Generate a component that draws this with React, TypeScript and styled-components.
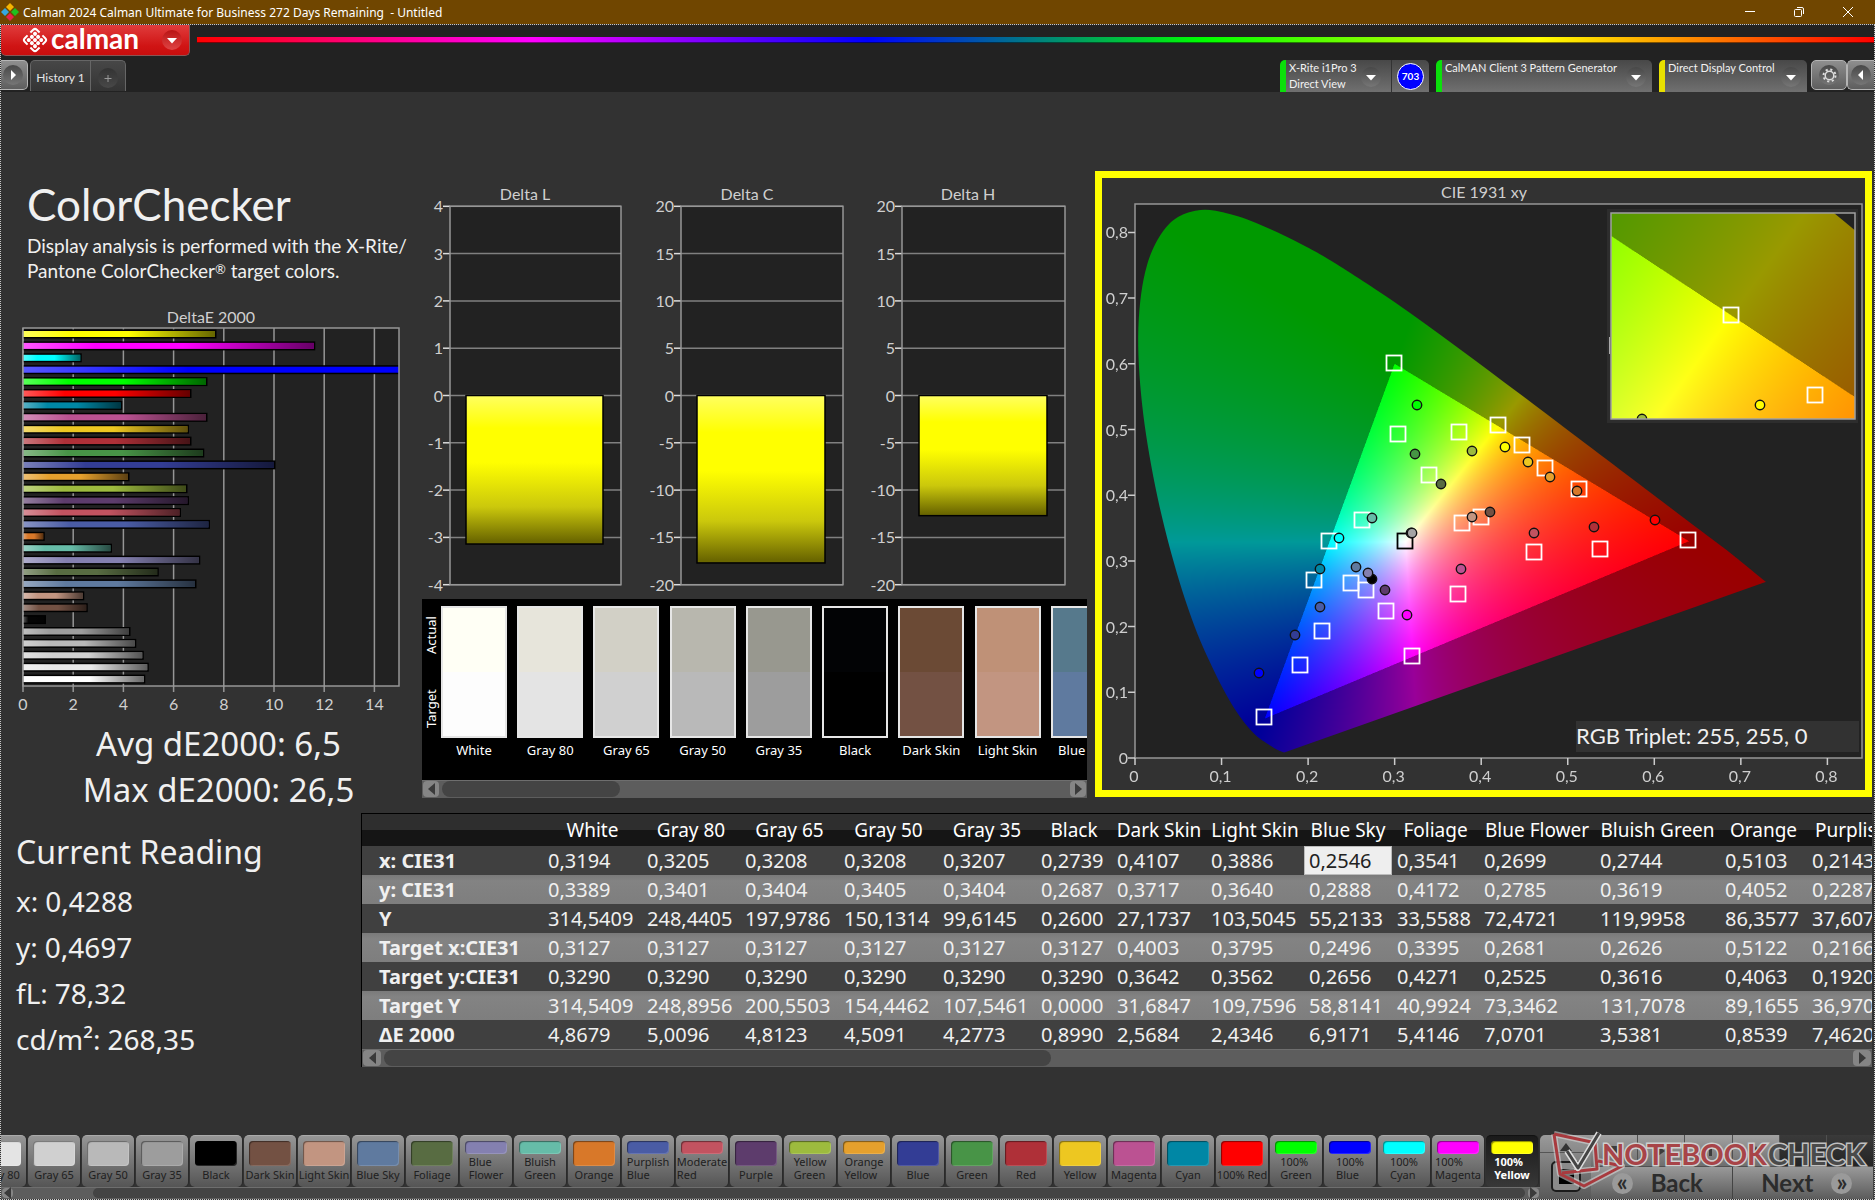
import React, { useLayoutEffect, useRef } from "react";
import styled, { createGlobalStyle, css } from "styled-components";

const UI = `"Lato", "Noto Sans", sans-serif`;
const WIDE = `"Noto Sans", "Open Sans", sans-serif`;

const GlobalStyle = createGlobalStyle`
  *, *::before, *::after { box-sizing: border-box; }
  body { margin: 0; background: #323232; color: #f0f0f0; font-family: ${UI}; }
  button { font: inherit; color: inherit; border: 0; padding: 0; margin: 0; background: none; cursor: pointer; }
  h1, h2, p, dl, dd, dt { margin: 0; font-weight: 400; }
`;

/* ---------- data ---------- */

type Patch = { name: string; color: string };

const PATCHES: Patch[] = [
  { name: "Gray 80", color: "#e4e4e4" },
  { name: "Gray 65", color: "#d0d0d0" },
  { name: "Gray 50", color: "#b9b9b9" },
  { name: "Gray 35", color: "#9d9d9d" },
  { name: "Black", color: "#000000" },
  { name: "Dark Skin", color: "#735143" },
  { name: "Light Skin", color: "#c29581" },
  { name: "Blue Sky", color: "#5f7a9f" },
  { name: "Foliage", color: "#586c42" },
  { name: "Blue Flower", color: "#8480b0" },
  { name: "Bluish Green", color: "#66bca8" },
  { name: "Orange", color: "#d87829" },
  { name: "Purplish Blue", color: "#4a5ca5" },
  { name: "Moderate Red", color: "#c25360" },
  { name: "Purple", color: "#5d3c6c" },
  { name: "Yellow Green", color: "#9dbb3e" },
  { name: "Orange Yellow", color: "#e5a02d" },
  { name: "Blue", color: "#333d95" },
  { name: "Green", color: "#489447" },
  { name: "Red", color: "#af3038" },
  { name: "Yellow", color: "#edc721" },
  { name: "Magenta", color: "#bb5292" },
  { name: "Cyan", color: "#0087a5" },
  { name: "100% Red", color: "#ff0000" },
  { name: "100% Green", color: "#00ff00" },
  { name: "100% Blue", color: "#0000ff" },
  { name: "100% Cyan", color: "#00ffff" },
  { name: "100% Magenta", color: "#ff00ff" },
  { name: "100% Yellow", color: "#ffff00" },
];

const DELTA_E: [string, number][] = [
  ["#ffff00", 7.72], ["#ff00ff", 11.67], ["#00ffff", 2.33], ["#0000ff", 26.5], ["#00ff00", 7.36],
  ["#ff0000", 6.72], ["#0087a5", 3.95], ["#bb5292", 7.36], ["#edc721", 6.62], ["#af3038", 6.72],
  ["#489447", 7.23], ["#333d95", 10.08], ["#e5a02d", 4.24], ["#9dbb3e", 6.56], ["#5d3c6c", 6.62],
  ["#c25360", 6.3], ["#4a5ca5", 7.46], ["#d87829", 0.85], ["#66bca8", 3.54], ["#8480b0", 7.07],
  ["#586c42", 5.41], ["#5f7a9f", 6.92], ["#c29581", 2.43], ["#735143", 2.57], ["#050505", 0.9],
  ["#9d9d9d", 4.28], ["#b9b9b9", 4.51], ["#d0d0d0", 4.81], ["#e8e8e8", 5.01], ["#ffffff", 4.87],
];

const SWATCHES: { name: string; actual: string; target: string }[] = [
  { name: "White", actual: "#fffff5", target: "#fdfdfd" },
  { name: "Gray 80", actual: "#e7e5db", target: "#e4e4e4" },
  { name: "Gray 65", actual: "#d2d0c6", target: "#d0d0d0" },
  { name: "Gray 50", actual: "#b8b7ae", target: "#b9b9b9" },
  { name: "Gray 35", actual: "#98988f", target: "#9d9d9d" },
  { name: "Black", actual: "#020305", target: "#000000" },
  { name: "Dark Skin", actual: "#6b4a35", target: "#735143" },
  { name: "Light Skin", actual: "#bf9177", target: "#c29581" },
  { name: "Blue Sky", actual: "#56798c", target: "#5f7a9f" },
];

const COLUMNS: [string, number][] = [
  ["White", 99], ["Gray 80", 98], ["Gray 65", 99], ["Gray 50", 99], ["Gray 35", 98], ["Black", 76],
  ["Dark Skin", 94], ["Light Skin", 98], ["Blue Sky", 88], ["Foliage", 87], ["Blue Flower", 116],
  ["Bluish Green", 125], ["Orange", 87], ["Purplish Blue", 134],
];

const ROWS: [string, string[]][] = [
  ["x: CIE31", ["0,3194", "0,3205", "0,3208", "0,3208", "0,3207", "0,2739", "0,4107", "0,3886", "0,2546", "0,3541", "0,2699", "0,2744", "0,5103", "0,2143"]],
  ["y: CIE31", ["0,3389", "0,3401", "0,3404", "0,3405", "0,3404", "0,2687", "0,3717", "0,3640", "0,2888", "0,4172", "0,2785", "0,3619", "0,4052", "0,2287"]],
  ["Y", ["314,5409", "248,4405", "197,9786", "150,1314", "99,6145", "0,2600", "27,1737", "103,5045", "55,2133", "33,5588", "72,4721", "119,9958", "86,3577", "37,6070"]],
  ["Target x:CIE31", ["0,3127", "0,3127", "0,3127", "0,3127", "0,3127", "0,3127", "0,4003", "0,3795", "0,2496", "0,3395", "0,2681", "0,2626", "0,5122", "0,2166"]],
  ["Target y:CIE31", ["0,3290", "0,3290", "0,3290", "0,3290", "0,3290", "0,3290", "0,3642", "0,3562", "0,2656", "0,4271", "0,2525", "0,3616", "0,4063", "0,1920"]],
  ["Target Y", ["314,5409", "248,8956", "200,5503", "154,4462", "107,5461", "0,0000", "31,6847", "109,7596", "58,8141", "40,9924", "73,3462", "131,7078", "89,1655", "36,9700"]],
  ["ΔE 2000", ["4,8679", "5,0096", "4,8123", "4,5091", "4,2773", "0,8990", "2,5684", "2,4346", "6,9171", "5,4146", "7,0701", "3,5381", "0,8539", "7,4620"]],
];

/* ---------- chromaticity maths ---------- */

const LOCUS: [number, number][] = [
  [0.1733, 0.0087], [0.1714, 0.0087], [0.1644, 0.0125], [0.1566, 0.0187], [0.144, 0.0297], [0.1355, 0.0399],
  [0.1241, 0.0578], [0.1096, 0.0868], [0.0913, 0.1327], [0.0687, 0.2007], [0.0454, 0.295],
  [0.0235, 0.4127], [0.0082, 0.5384], [0.0039, 0.6548], [0.0139, 0.7502], [0.0389, 0.812],
  [0.0743, 0.8338], [0.1142, 0.8262], [0.1547, 0.8059], [0.1929, 0.7816], [0.2296, 0.7543],
  [0.3016, 0.6923], [0.3731, 0.6245], [0.4441, 0.5547], [0.5125, 0.4866], [0.5752, 0.4242],
  [0.627, 0.3725], [0.6658, 0.334], [0.6915, 0.3083], [0.729, 0.268],
];

/* Linear sRGB of a chromaticity, clipped to the gamut and dimmed outside of it. */
function gamutColor(x: number, y: number): [number, number, number] {
  const X = x / y;
  const Z = (1 - x - y) / y;
  const r = 3.2406 * X - 1.5372 - 0.4986 * Z;
  const g = -0.9689 * X + 1.8758 + 0.0415 * Z;
  const b = 0.0557 * X - 0.204 + 1.057 * Z;
  const outside = Math.min(r, g, b) < 0;
  const k = (outside ? 153 : 255) / Math.max(r, g, b);
  return [Math.max(r, 0) * k, Math.max(g, 0) * k, Math.max(b, 0) * k];
}

type Range = { x0: number; x1: number; y0: number; y1: number };

const Surface = styled.canvas`
  display: block;
  width: 100%;
  height: 100%;
`;

function Chromaticity({ range, width, height }: { range: Range; width: number; height: number }) {
  const ref = useRef<HTMLCanvasElement>(null);
  useLayoutEffect(() => {
    const canvas = ref.current;
    const ctx = canvas?.getContext("2d");
    if (!canvas || !ctx) return;
    const w = canvas.width;
    const h = canvas.height;
    const image = ctx.createImageData(w, h);
    for (let j = 0; j < h; j++) {
      const y = range.y1 - ((j + 0.5) / h) * (range.y1 - range.y0);
      for (let i = 0; i < w; i++) {
        const x = range.x0 + ((i + 0.5) / w) * (range.x1 - range.x0);
        const [r, g, b] = gamutColor(x, Math.max(y, 0.001));
        const o = (j * w + i) * 4;
        image.data[o] = r;
        image.data[o + 1] = g;
        image.data[o + 2] = b;
        image.data[o + 3] = 255;
      }
    }
    ctx.putImageData(image, 0, 0);
    const pts = LOCUS.map(([x, y]) => [
      ((x - range.x0) / (range.x1 - range.x0)) * w,
      ((range.y1 - y) / (range.y1 - range.y0)) * h,
    ]);
    ctx.globalCompositeOperation = "destination-in";
    ctx.beginPath();
    ctx.moveTo(pts[0][0], pts[0][1]);
    for (let i = 0; i < pts.length - 1; i++) {
      const a = pts[Math.max(i - 1, 0)];
      const b = pts[i];
      const c = pts[i + 1];
      const d = pts[Math.min(i + 2, pts.length - 1)];
      ctx.bezierCurveTo(
        b[0] + (c[0] - a[0]) / 6, b[1] + (c[1] - a[1]) / 6,
        c[0] - (d[0] - b[0]) / 6, c[1] - (d[1] - b[1]) / 6,
        c[0], c[1],
      );
    }
    ctx.closePath();
    ctx.fill();
  }, [range]);
  return <Surface ref={ref} width={width * 2} height={height * 2} />;
}

/* ---------- shared parts ---------- */

const ChartSvg = styled.svg`
  display: block;
  width: 100%;
  height: auto;
  text { font-family: ${UI}; font-size: 16px; fill: #cfcfcf; }
`;

const ScrollTrack = styled.div<{ $h: number }>`
  display: flex;
  align-items: center;
  gap: 3px;
  height: ${(p) => p.$h}px;
  padding: 1px;
  background: #5d5d5d;
  box-shadow: inset 0 1px #6e6e6e;
`;
const ScrollArrow = styled.button<{ $w: number }>`
  display: flex;
  align-items: center;
  justify-content: center;
  flex: 0 0 ${(p) => p.$w}px;
  height: 100%;
  border-radius: 4px;
  background: #858585;
  svg { width: 7px; height: 12px; }
`;
const ScrollLane = styled.div<{ $start: number }>`
  flex: 1;
  height: 100%;
  padding-left: ${(p) => p.$start}%;
`;
const ScrollThumb = styled.div<{ $size: number }>`
  width: ${(p) => p.$size}%;
  height: 100%;
  border-radius: 8px;
  background: #444;
`;

function Scrollbar({ h, arrow, start = 0, size }: { h: number; arrow: number; start?: number; size: number }) {
  return (
    <ScrollTrack $h={h}>
      <ScrollArrow $w={arrow} aria-label="Scroll left">
        <svg viewBox="0 0 7 12"><path d="M7 0v12L0 6z" fill="#3a3a3a" /></svg>
      </ScrollArrow>
      <ScrollLane $start={start}><ScrollThumb $size={size} /></ScrollLane>
      <ScrollArrow $w={arrow} aria-label="Scroll right">
        <svg viewBox="0 0 7 12"><path d="M0 0v12l7-6z" fill="#3a3a3a" /></svg>
      </ScrollArrow>
    </ScrollTrack>
  );
}

/* ---------- window chrome ---------- */

const Window = styled.div`
  display: flex;
  flex-direction: column;
  min-height: 100vh;
`;
const TitleBar = styled.header`
  display: flex;
  align-items: center;
  height: 24px;
  padding-left: 1px;
  background: #704600;
  color: #fff;
  font: 12px ${WIDE};
  white-space: pre;
`;
const AppMark = styled.svg`
  width: 18px;
  height: 18px;
  margin-right: 4px;
`;
const WindowButtons = styled.div`
  display: flex;
  margin-left: auto;
  padding-right: 3px;
`;
const WindowButton = styled.button`
  display: flex;
  align-items: center;
  justify-content: center;
  width: 49px;
  height: 24px;
  svg { width: 12px; height: 12px; fill: none; stroke: #fff; }
`;
const Frame = styled.div`
  display: flex;
  flex: 1;
  flex-direction: column;
  min-width: 0;
  border: 1px dotted #c8c8c8;
  background: #323232;
`;
const BrandRow = styled.div`
  display: flex;
  height: 35px;
  background: #222;
`;
const BrandButton = styled.button`
  display: flex;
  align-items: center;
  flex: 0 0 189px;
  height: 31px;
  padding-left: 21px;
  border: 1px solid #8a5555;
  border-width: 0 1px 1px 0;
  border-radius: 0 0 5px 5px;
  background: linear-gradient(#e03c3c, #d01414 70%, #c80e0e);
  color: #fff;
  > svg { width: 26px; height: 26px; }
`;
const BrandName = styled.span`
  flex: 1;
  margin-left: 3px;
  padding-bottom: 5px;
  font: 700 28px/28px ${UI};
  text-align: left;
`;
const Disc = styled.span<{ $tone: "red" | "grey" | "dark" }>`
  display: flex;
  align-items: center;
  justify-content: center;
  flex: 0 0 20px;
  width: 20px;
  height: 20px;
  border-radius: 50%;
  background: ${(p) =>
    p.$tone === "red" ? "linear-gradient(#b81414, #e04444)" : p.$tone === "dark" ? "linear-gradient(#333, #484848)" : "linear-gradient(#484848, #767676)"};
  svg { width: 10px; height: 10px; }
`;
const BrandDisc = styled(Disc)`
  margin-right: 7px;
`;
const GearDisc = styled(Disc)`
  svg { width: 15px; height: 15px; }
`;
const Rainbow = styled.div`
  flex: 1;
  height: 6px;
  margin: 12px 0 0 7px;
  background: linear-gradient(90deg, #f00, #f0f, #00f, #0f0, #ff0, #f00);
  border-bottom: 1px solid rgba(0, 0, 0, 0.5);
`;

const TabRow = styled.div`
  display: flex;
  align-items: flex-start;
  height: 32px;
  background: #222;
`;
const Knob = styled.button<{ $side?: "left" | "right" }>`
  display: flex;
  align-items: center;
  justify-content: center;
  flex: 0 0 ${(p) => (p.$side ? 27 : 36)}px;
  height: 30px;
  border: 1px solid #b4b4b4;
  border-radius: ${(p) => (p.$side === "left" ? "0 5px 5px 0" : p.$side === "right" ? "5px 0 0 5px" : "5px")};
  ${(p) => p.$side === "left" && css`border-left: 0; padding-right: 3px;`}
  ${(p) => p.$side === "right" && css`border-right: 0;`}
  background: linear-gradient(#8e8e8e, #5e5e5e);
`;
const Tab = styled.button<{ $w: number }>`
  display: flex;
  align-items: center;
  justify-content: center;
  flex: 0 0 ${(p) => p.$w}px;
  height: 31px;
  padding-top: 3px;
  border: 1px solid #666;
  border-bottom: 0;
  background: linear-gradient(#474747, #343434);
  color: #e6e6e6;
  font: 12px ${UI};
  &:first-of-type { border-radius: 5px 0 0 0; }
  &:last-of-type { border-radius: 0 5px 0 0; border-left: 0; }
`;
const Tabs = styled.nav`
  display: flex;
  margin-left: 2px;
`;
const Devices = styled.div`
  display: flex;
  align-items: flex-start;
  gap: 7px;
  margin: 0 4px 0 auto;
`;
const Device = styled.button<{ $w: number; $mark: string }>`
  display: flex;
  align-items: stretch;
  flex: 0 0 ${(p) => p.$w}px;
  height: 32px;
  overflow: hidden;
  border-radius: 5px 5px 0 0;
  border-left: 6px solid ${(p) => p.$mark};
  background: linear-gradient(#484848, #707070);
  color: #f2f2f2;
  font: 11px/16px ${UI};
  text-align: left;
`;
const DeviceText = styled.span`
  flex: 1;
  padding-left: 3px;
  white-space: nowrap;
`;
const DeviceDisc = styled(Disc)`
  margin: 7px 6px 0 0;
`;
const MeterCell = styled.span`
  display: flex;
  align-items: center;
  justify-content: center;
  flex: 0 0 38px;
  margin-left: 4px;
  border-left: 1px solid #333;
`;
const MeterBadge = styled.span`
  width: 27px;
  height: 27px;
  border: 1px solid #fff;
  border-radius: 50%;
  background: #00f;
  color: #fff;
  font: 700 10px/25px ${UI};
  text-align: center;
`;

const DownArrow = () => <svg viewBox="0 0 10 10"><path d="M0 3h10L5 8.500z" fill="#fff" /></svg>;

/* ---------- workspace ---------- */

const Workspace = styled.main`
  flex: 1;
  padding: 79px 2px 67px 0;
`;
const ChartRow = styled.section`
  display: grid;
  grid-template-columns: minmax(0, 421fr) minmax(0, 665fr) minmax(0, 785fr);
`;
const Heading = styled.h1`
  margin: 7px 0 0 26px;
  font-size: 44px;
  line-height: 52px;
`;
const Intro = styled.p`
  margin: 3px 0 22px 26px;
  font-size: 19px;
  line-height: 25px;
  white-space: nowrap;
  sup { font-size: 13px; line-height: 0; vertical-align: 4px; }
`;
const Summary = styled.p`
  margin-top: 5px;
  padding-left: 14px;
  font: 33px/46px ${WIDE};
  text-align: center;
`;
const MiddleColumn = styled.div`
  padding-top: 12px;
`;
const SwatchPanel = styled.div`
  display: flex;
  height: 181px;
  overflow: hidden;
  background: #000;
  color: #fff;
  font: 13px/18px ${WIDE};
`;
const SwatchSides = styled.div`
  display: flex;
  flex-direction: column-reverse;
  flex: 0 0 19px;
  height: 146px;
  span { flex: 1; writing-mode: vertical-rl; transform: rotate(180deg); text-align: center; }
`;
const SwatchList = styled.div`
  display: flex;
  flex: 1;
  min-width: 0;
  padding-top: 7px;
`;
const SwatchCell = styled.figure`
  flex: 0 0 11.800%;
  margin: 0;
  figcaption { width: 66px; margin-top: 3px; text-align: center; white-space: nowrap; }
`;
const SwatchBox = styled.div<{ $top: string; $bottom: string }>`
  width: 66px;
  height: 132px;
  border: 2px solid #e6e6e6;
  background: linear-gradient(${(p) => p.$top} 50%, ${(p) => p.$bottom} 50%);
  background-clip: padding-box;
`;
const CiePanel = styled.div`
  align-self: start;
  margin-left: 8px;
  border: 7px solid #ff0;
  background: #323232;
`;

const DataRow = styled.section`
  display: grid;
  grid-template-columns: 360px minmax(0, 1fr);
`;
const Reading = styled.div`
  padding: 16px 0 0 15px;
  font-family: ${WIDE};
  h2 { font-size: 32px; line-height: 46px; }
  dl { margin-top: 3px; font-size: 28px; line-height: 46px; }
  dl div { display: flex; gap: 7px; }
`;
const TablePanel = styled.div`
  overflow: hidden;
  border-left: 1px solid #000;
  border-top: 1px solid #000;
`;
const TableClip = styled.div`
  overflow: hidden;
`;
const DataTable = styled.table`
  width: 1579px;
  table-layout: fixed;
  border-collapse: collapse;
  font: 20px/28px ${WIDE};
  white-space: nowrap;
  th, td { padding: 0; }
  thead tr { height: 32px; background: linear-gradient(#2e2e2e 50%, #151515 50%); }
  thead th { font-size: 19px; font-weight: 400; text-align: center; color: #fff; }
  tbody tr { height: 29px; background: #404040; }
  tbody tr:nth-child(even) { background: linear-gradient(#7a7a7a, #838383 20%, #7e7e7e); }
  tbody th { padding-left: 17px; font-size: 20px; font-weight: 700; text-align: left; }
`;
const Cell = styled.td<{ $selected: boolean }>`
  && { padding-left: 5px; }
  ${(p) => p.$selected && css`
    background: #eee;
    color: #222;
    box-shadow: inset 0 0 0 1px #bbb;
  `}
`;

/* ---------- charts ---------- */

function DeltaEChart() {
  const ux = (v: number) => 23 + v * 25.1;
  return (
    <ChartSvg viewBox="1 305 421 411" role="img" aria-label="DeltaE 2000 by patch">
      <defs>
        <linearGradient id="sheen">
          <stop offset="0" stopColor="#fff" stopOpacity=".35" />
          <stop offset=".25" stopColor="#fff" stopOpacity="0" />
          <stop offset=".55" stopColor="#000" stopOpacity="0" />
          <stop offset="1" stopColor="#000" stopOpacity=".6" />
        </linearGradient>
        <clipPath id="deltaClip"><rect x="23" y="328" width="376" height="358" /></clipPath>
      </defs>
      <text x="211" y="323" textAnchor="middle">DeltaE 2000</text>
      <rect x="23" y="328" width="376" height="358" fill="#222" />
      {[0, 2, 4, 6, 8, 10, 12, 14].map((v) => (
        <g key={v}>
          <path d={`M${ux(v)} 328V692`} stroke="#969696" strokeWidth="1.500" />
          <text x={ux(v)} y="710" textAnchor="middle">{v}</text>
        </g>
      ))}
      <g clipPath="url(#deltaClip)">
        {DELTA_E.map(([color, value], i) => {
          const y = 334 + i * 11.9;
          return (
            <g key={i}>
              <rect x="20" y={y - 4.5} width={value * 25 + 3.5} height="9" fill="#000" />
              <rect x="23" y={y - 3} width={value * 25 - 1} height="6" fill={color} />
              <rect x="23" y={y - 3} width={value * 25 - 1} height="6" fill="url(#sheen)" />
            </g>
          );
        })}
      </g>
      <rect x="23" y="328" width="376" height="358" fill="none" stroke="#969696" strokeWidth="1.500" />
    </ChartSvg>
  );
}

type DeltaProps = { title: string; cx: number; left: number; right: number; max: number; value: number; bar: [number, number] };

function DeltaChart({ title, cx, left, right, max, value, bar }: DeltaProps) {
  const step = 47.3;
  const mid = 395.5;
  const end = mid + (value / max) * 4 * step;
  return (
    <g>
      <text x={cx} y="200" textAnchor="middle">{title}</text>
      <rect x={left} y={mid - 4 * step} width={right - left} height={8 * step} fill="#222" />
      {[4, 3, 2, 1, 0, -1, -2, -3, -4].map((k) => (
        <g key={k}>
          <path d={`M${left - 7} ${mid - k * step}H${left}`} stroke="#ddd" strokeWidth="1.500" />
          <path d={`M${left} ${mid - k * step}H${right}`} stroke="#808080" strokeWidth="1.500" />
          <text x={left - 7} y={mid - k * step + 6} textAnchor="end">{(k * max) / 4}</text>
        </g>
      ))}
      <rect x={left} y={mid - 4 * step} width={right - left} height={8 * step} fill="none" stroke="#969696" strokeWidth="1.500" />
      <rect x={bar[0]} y={mid} width={bar[1] - bar[0]} height={end - mid} fill="url(#yellowBar)" stroke="#000" strokeWidth="1.500" />
    </g>
  );
}

const MAIN_RANGE: Range = { x0: 0, x1: 0.84, y0: 0, y1: 0.8432 };
const INSET_RANGE: Range = { x0: 0.3798, x1: 0.4601, y0: 0.4642, y1: 0.5457 };

const TARGETS: [number, number][] = [
  [1394, 363], [1398, 434], [1459, 432], [1498, 425], [1522, 445], [1545, 468], [1579, 489], [1429, 475],
  [1362, 520], [1329, 541], [1462, 523], [1481, 517], [1534, 552], [1600, 549], [1688, 540], [1314, 580],
  [1351, 583], [1366, 590], [1386, 611], [1458, 594], [1322, 631], [1412, 656], [1300, 665], [1264, 717],
];
const MEASURED: [number, number, string][] = [
  [1417, 405, "#00ff00"], [1415, 454, "#469544"], [1472, 451, "#9dbb3e"], [1505, 447, "#ffff00"],
  [1528, 462, "#edc721"], [1550, 477, "#e5a02d"], [1577, 491, "#d87829"], [1441, 484, "#586c42"],
  [1372, 518, "#66bca8"], [1339, 538, "#00ffff"], [1411, 533, "#ddd"], [1412, 533, "#a4a4a4"],
  [1472, 517, "#c29581"], [1490, 512, "#735143"], [1534, 533, "#c25360"], [1594, 527, "#af3038"],
  [1655, 520, "#ff0000"], [1320, 569, "#0087a5"], [1356, 567, "#5f7a9f"], [1372, 579, "#000"],
  [1368, 573, "#8480b0"], [1385, 590, "#5d3c6c"], [1461, 569, "#bb5292"], [1320, 607, "#4a5ca5"],
  [1407, 615, "#ff00ff"], [1295, 635, "#333d95"], [1259, 673, "#0000ff"],
];

const Square = ({ x, y, color = "#fff" }: { x: number; y: number; color?: string }) => (
  <rect x={x - 7.5} y={y - 7.5} width="15" height="15" fill="none" stroke={color} strokeWidth="1.800" />
);
const Dot = ({ x, y, color }: { x: number; y: number; color: string }) => (
  <circle cx={x} cy={y} r="4.700" fill={color} stroke="#111" strokeWidth="1.400" />
);

const TripletText = styled.text`
  && { font-size: 22px; fill: #f0f0f0; }
`;

function CieChart() {
  const px = (v: number) => 1135 + v * 865.5;
  const py = (v: number) => 758 - v * 657;
  const label = (v: number) => (v === 0 ? "0" : `0,${v * 10}`);
  return (
    <ChartSvg viewBox="1102 178 763 612" role="img" aria-label="CIE 1931 xy chromaticity">
      <text x="1484" y="198" textAnchor="middle">CIE 1931 xy</text>
      <rect x="1135" y="204" width="727" height="554" fill="#222" />
      <foreignObject x="1135" y="204" width="727" height="554">
        <Chromaticity range={MAIN_RANGE} width={727} height={554} />
      </foreignObject>
      <rect x="1135" y="204" width="727" height="554" fill="none" stroke="#969696" strokeWidth="1.500" />
      {[0, 0.1, 0.2, 0.3, 0.4, 0.5, 0.6, 0.7, 0.8].map((v) => (
        <g key={v}>
          <path d={`M${px(v)} 758v7M1128 ${py(v)}h7`} stroke="#ccc" strokeWidth="1.500" />
          <text x={px(v) - 1} y="782" textAnchor="middle">{label(v)}</text>
          <text x="1128" y={py(v) + 6} textAnchor="end">{label(v)}</text>
        </g>
      ))}
      {TARGETS.map(([x, y], i) => <Square key={i} x={x} y={y} />)}
      <Square x={1405} y={541} color="#000" />
      {MEASURED.map(([x, y, c], i) => <Dot key={i} x={x} y={y} color={c} />)}

      <rect x="1607" y="209" width="251" height="214" fill="#2d2d2d" />
      <path d="M1609.500 337v17" stroke="#aaa" />
      <rect x="1611" y="213" width="244" height="206" fill="#222" />
      <foreignObject x="1611" y="213" width="244" height="206">
        <Chromaticity range={INSET_RANGE} width={244} height={206} />
      </foreignObject>
      <clipPath id="insetClip"><rect x="1611" y="213" width="244" height="206" /></clipPath>
      <g clipPath="url(#insetClip)">
        <Square x={1731} y={315} />
        <Square x={1815} y={395} />
        <Dot x={1760} y={405} color="#ffff00" />
        <Dot x={1642} y={419} color="#9dbb3e" />
      </g>
      <rect x="1611" y="213" width="244" height="206" fill="none" stroke="#a0a0a0" strokeWidth="1.500" />

      <rect x="1576" y="721" width="283" height="31" fill="#323232" />
      <TripletText x="1576" y="744">RGB Triplet: 255, 255, 0</TripletText>
    </ChartSvg>
  );
}

/* ---------- bottom bar ---------- */

const BottomBar = styled.footer`
  display: flex;
  height: 64px;
`;
const StripColumn = styled.div`
  flex: 1;
  min-width: 0;
  display: flex;
  flex-direction: column;
  justify-content: space-between;
`;
const Strip = styled.div`
  display: flex;
  justify-content: flex-end;
  height: 52px;
  overflow: hidden;
`;
const PatchButton = styled.button<{ $active: boolean }>`
  display: flex;
  flex-direction: column;
  align-items: center;
  justify-content: space-between;
  flex: 0 0 52px;
  height: 52px;
  margin-right: 2px;
  padding: 5px 0 6px;
  border-radius: 5px;
  border-top: 1px solid #aaa;
  background: linear-gradient(#969696, #555);
  box-shadow: 1px 0 #2a2a2a;
  color: #202020;
  font: 11px/13px ${WIDE};
  ${(p) => p.$active && css`
    border-top-color: #111;
    background: linear-gradient(#1a1a1a, #383838);
    color: #fff;
    font-weight: 700;
  `}
`;
const PatchChip = styled.span<{ $color: string; $short: boolean }>`
  width: 42px;
  height: ${(p) => (p.$short ? 13 : 25)}px;
  border-radius: 4px;
  background: ${(p) => p.$color};
  box-shadow: inset 1px 1px 1px rgba(0, 0, 0, 0.45), inset -1px -1px rgba(255, 255, 255, 0.15);
`;
const PatchLabel = styled.span`
  max-width: 52px;
  text-align: left;
  white-space: pre;
`;
const Transport = styled.div`
  position: relative;
  display: flex;
  flex: 0 0 334px;
  color: #2c2c2c;
`;
const SideControls = styled.div`
  display: flex;
  flex-direction: column;
  align-items: center;
  gap: 8px;
  flex: 0 0 51px;
  background: linear-gradient(#9a9a9a, #585858);
  border-radius: 5px 0 0 0;
`;
const UpButton = styled.button`
  height: 18px;
  width: 100%;
  border-bottom: 1px solid #555;
  svg { width: 12px; height: 8px; }
`;
const StopButton = styled.button`
  width: 30px;
  height: 31px;
  padding: 6px;
  border: 2px solid #1c1c1c;
  border-radius: 5px;
  background: #8a8a8a;
  &::before { content: ""; display: block; width: 15px; height: 15px; background: #000; }
`;
const TransportGrid = styled.div`
  flex: 1;
  display: grid;
  grid-template: 32px 32px / repeat(6, 1fr);
`;
const TransportButton = styled.button<{ $off?: boolean }>`
  border: 1px solid #505050;
  border-width: 0 1px 1px 0;
  background: ${(p) => (p.$off ? "linear-gradient(#3a3a3a, #242424)" : "linear-gradient(#a2a2a2, #6e6e6e)")};
  svg { width: 12px; height: 12px; fill: #3c3c3c; }
`;
const PageButton = styled.button<{ $dir: "back" | "next" }>`
  grid-column: span 3;
  display: flex;
  align-items: center;
  justify-content: center;
  gap: 18px;
  padding: ${(p) => (p.$dir === "back" ? "0 8px 0 0" : "0 0 0 8px")};
  border-right: 1px solid #444;
  background: linear-gradient(#999, #5c5c5c);
  font: 700 24px/30px ${UI};
`;
const PageDisc = styled.span`
  width: 21px;
  height: 21px;
  border-radius: 50%;
  background: #9a9a9a;
  line-height: 17px;
  text-align: center;
`;
const Watermark = styled.svg`
  position: absolute;
  left: 9px;
  top: -6px;
  width: 321px;
  height: 62px;
  pointer-events: none;
  text { font: 700 29px ${UI}; paint-order: stroke; }
`;

function splitLabel(name: string) {
  if (/^(Dark|Light|Gray|Blue Sky)/.test(name) || name === "100% Red") return name;
  return name.replace(" ", "\n");
}

const TRANSPORT_ICONS = ["M3 1h6v10H3z", "M3 1l7 5-7 5z", "M2 1h3v10H2zM7 1h3v10H7z", "M6 1l5 10H1z", "M3 1l7 5-7 5z", "M3 1l7 5-7 5z"];

export default function App() {
  return (
    <Window>
      <GlobalStyle />
      <TitleBar>
        <AppMark viewBox="0 0 18 18">
          <path d="M9 0l4 4-4 4-4-4z" fill="#f5b400" />
          <path d="M4 5l4 4-4 4-4-4z" fill="#35a8e0" />
          <path d="M14 5l4 4-4 4-4-4z" fill="#1fc01f" />
          <path d="M9 10l4 4-4 4-4-4z" fill="#e8204a" />
        </AppMark>
        {"Calman 2024 Calman Ultimate for Business 272 Days Remaining  - Untitled"}
        <WindowButtons>
          <WindowButton aria-label="Minimize"><svg viewBox="0 0 12 12"><path d="M1 5.500h10" /></svg></WindowButton>
          <WindowButton aria-label="Restore"><svg viewBox="0 0 12 12"><rect x="1.500" y="3.500" width="7" height="7" rx="1" /><path d="M4 1.500h5q1.500 0 1.500 1.500v5" /></svg></WindowButton>
          <WindowButton aria-label="Close"><svg viewBox="0 0 12 12"><path d="M1 1l10 10M11 1L1 11" /></svg></WindowButton>
        </WindowButtons>
      </TitleBar>
      <Frame>
        <BrandRow>
          <BrandButton>
            <svg viewBox="0 0 26 26">
              <g transform="rotate(45 13 13)" fill="#fff">
                <path d="M4.500 11V7q0-2.500 2.500-2.500h4M15 4.500h4q2.500 0 2.500 2.500v4M21.500 15v4q0 2.500-2.500 2.500h-4M11 21.500H7q-2.500 0-2.500-2.500v-4" fill="none" stroke="#fff" strokeWidth="2" />
                {[8.6, 13, 17.4].map((x) => [8.6, 13, 17.4].map((y) => <circle key={`${x}-${y}`} cx={x} cy={y} r="2" />))}
              </g>
            </svg>
            <BrandName>calman</BrandName>
            <BrandDisc $tone="red"><DownArrow /></BrandDisc>
          </BrandButton>
          <Rainbow />
        </BrandRow>
        <TabRow>
          <Knob $side="left" aria-label="Open panel">
            <Disc $tone="grey"><svg viewBox="0 0 10 10"><path d="M3 0v10l5-5z" fill="#fff" /></svg></Disc>
          </Knob>
          <Tabs>
            <Tab $w={61}>History 1</Tab>
            <Tab $w={35} aria-label="Add tab">
              <Disc $tone="dark"><svg viewBox="0 0 10 10"><path d="M5 2v7M1.500 5.500h7" stroke="#999" /></svg></Disc>
            </Tab>
          </Tabs>
          <Devices>
            <Device $w={149} $mark="#0be00b">
              <DeviceText>X-Rite i1Pro 3<br />Direct View</DeviceText>
              <DeviceDisc $tone="grey"><DownArrow /></DeviceDisc>
              <MeterCell><MeterBadge>703</MeterBadge></MeterCell>
            </Device>
            <Device $w={216} $mark="#0be00b">
              <DeviceText>CalMAN Client 3 Pattern Generator</DeviceText>
              <DeviceDisc $tone="grey"><DownArrow /></DeviceDisc>
            </Device>
            <Device $w={148} $mark="#e8e000">
              <DeviceText>Direct Display Control</DeviceText>
              <DeviceDisc $tone="grey"><DownArrow /></DeviceDisc>
            </Device>
          </Devices>
          <Knob aria-label="Settings">
            <GearDisc $tone="grey">
              <svg viewBox="0 0 14 14">
                <circle cx="7" cy="7" r="4" fill="none" stroke="#ddd" strokeWidth="1.400" />
                <circle cx="7" cy="7" r="5.600" fill="none" stroke="#ddd" strokeWidth="1.800" strokeDasharray="2 2.400" />
              </svg>
            </GearDisc>
          </Knob>
          <Knob $side="right" aria-label="Open side panel">
            <Disc $tone="grey"><svg viewBox="0 0 10 10"><path d="M7 0v10L2 5z" fill="#fff" /></svg></Disc>
          </Knob>
        </TabRow>

        <Workspace>
          <ChartRow>
            <div>
              <Heading>ColorChecker</Heading>
              <Intro>Display analysis is performed with the X-Rite/<br />Pantone ColorChecker<sup>®</sup> target colors.</Intro>
              <DeltaEChart />
              <Summary>Avg dE2000: 6,5<br />Max dE2000: 26,5</Summary>
            </div>
            <MiddleColumn>
              <ChartSvg viewBox="422 183 665 416" role="img" aria-label="Delta L, Delta C and Delta H">
                <defs>
                  <linearGradient id="yellowBar" x2="0" y2="1">
                    <stop offset="0" stopColor="#ffff60" />
                    <stop offset=".22" stopColor="#ffff00" />
                    <stop offset=".45" stopColor="#ffff00" />
                    <stop offset=".75" stopColor="#cbc80c" />
                    <stop offset=".98" stopColor="#6c6800" />
                  </linearGradient>
                </defs>
                <DeltaChart title="Delta L" cx={525} left={450} right={621} max={4} value={3.14} bar={[466, 603]} />
                <DeltaChart title="Delta C" cx={747} left={681} right={843} max={20} value={17.7} bar={[697, 825]} />
                <DeltaChart title="Delta H" cx={968} left={902} right={1065} max={20} value={12.7} bar={[919, 1047]} />
              </ChartSvg>
              <SwatchPanel>
                <SwatchSides><span>Target</span><span>Actual</span></SwatchSides>
                <SwatchList>
                  {SWATCHES.map((s) => (
                    <SwatchCell key={s.name}>
                      <SwatchBox $top={s.actual} $bottom={s.target} />
                      <figcaption>{s.name}</figcaption>
                    </SwatchCell>
                  ))}
                </SwatchList>
              </SwatchPanel>
              <Scrollbar h={18} arrow={16} size={28.5} />
            </MiddleColumn>
            <CiePanel><CieChart /></CiePanel>
          </ChartRow>

          <DataRow>
            <Reading>
              <h2>Current Reading</h2>
              <dl>
                <div><dt>x:</dt><dd>0,4288</dd></div>
                <div><dt>y:</dt><dd>0,4697</dd></div>
                <div><dt>fL:</dt><dd>78,32</dd></div>
                <div><dt>cd/m²:</dt><dd>268,35</dd></div>
              </dl>
            </Reading>
            <TablePanel>
              <TableClip>
                <DataTable>
                  <colgroup>
                    <col style={{ width: 181 }} />
                    {COLUMNS.map(([name, w]) => <col key={name} style={{ width: w }} />)}
                  </colgroup>
                  <thead>
                    <tr><th aria-label="Measure" />{COLUMNS.map(([name]) => <th key={name} scope="col">{name}</th>)}</tr>
                  </thead>
                  <tbody>
                    {ROWS.map(([label, values], r) => (
                      <tr key={label}>
                        <th scope="row">{label}</th>
                        {values.map((v, c) => <Cell key={c} $selected={r === 0 && c === 8}>{v}</Cell>)}
                      </tr>
                    ))}
                  </tbody>
                </DataTable>
              </TableClip>
              <Scrollbar h={18} arrow={18} size={45.5} />
            </TablePanel>
          </DataRow>
        </Workspace>

        <BottomBar>
          <StripColumn>
            <Strip>
              {PATCHES.map((p) => {
                const label = splitLabel(p.name);
                return (
                  <PatchButton key={p.name} $active={p.name === "100% Yellow"}>
                    <PatchChip $color={p.color} $short={label.includes("\n")} />
                    <PatchLabel>{label}</PatchLabel>
                  </PatchButton>
                );
              })}
            </Strip>
            <Scrollbar h={12} arrow={11} start={5} size={100} />
          </StripColumn>
          <Transport>
            <SideControls>
              <UpButton aria-label="Expand"><svg viewBox="0 0 12 8"><path d="M6 0l6 8H0z" fill="#333" /></svg></UpButton>
              <StopButton aria-label="Stop" />
            </SideControls>
            <TransportGrid>
              {TRANSPORT_ICONS.map((d, i) => (
                <TransportButton key={i} $off={i > 3} aria-label={`Control ${i + 1}`}>
                  {i < 4 && <svg viewBox="0 0 12 12"><path d={d} /></svg>}
                </TransportButton>
              ))}
              <PageButton $dir="back"><PageDisc>«</PageDisc>Back</PageButton>
              <PageButton $dir="next">Next<PageDisc>»</PageDisc></PageButton>
            </TransportGrid>
            <Watermark viewBox="0 0 321 62" aria-hidden="true">
              <g fill="none" strokeLinejoin="round">
                <path d="M5 5l42 9M5 5l6 40 24 12 38-20-24-5M46 14l2 26-35 4" stroke="#ddd" strokeWidth="6" opacity=".55" />
                <path d="M5 5l42 9M5 5l6 40 24 12 38-20-24-5M46 14l2 26-35 4" stroke="#a83a3e" strokeWidth="3" />
                <path d="M18 22l11 17L50 4" stroke="#ddd" strokeWidth="6" />
                <path d="M18 22l11 17L50 4" stroke="#444" strokeWidth="3" />
              </g>
              <text x="53" y="36" fill="#a84448" stroke="#d0d0d0" strokeWidth="3">NOTEBOOK</text>
              <text x="219" y="36" fill="#4a4a4a" stroke="#c0c0c0" strokeWidth="3">CHECK</text>
            </Watermark>
          </Transport>
        </BottomBar>
      </Frame>
    </Window>
  );
}
